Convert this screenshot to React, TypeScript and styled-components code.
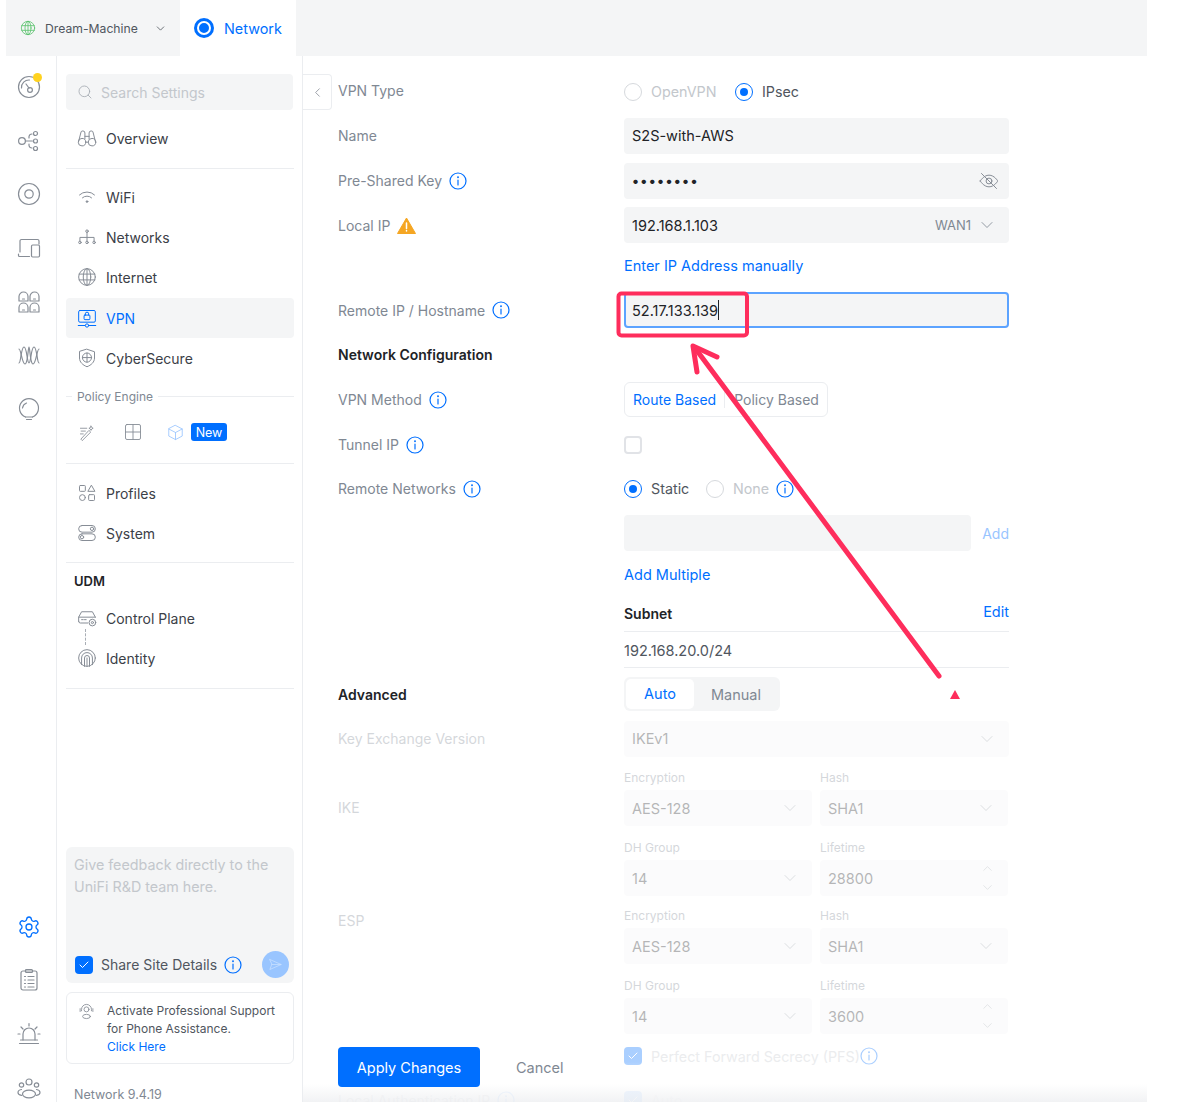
import { FC, ReactNode } from 'react';
import styled, { createGlobalStyle } from 'styled-components';
import { ChevronDown, ChevronLeft, ChevronUp, Search, Check, Settings } from 'lucide-react';

const BLUE = '#006fff';
const GREY = '#808893';
const ICON = '#878d96';
const FILL = '#f4f5f6';
const LINE = '#ebedf0';

const Global = createGlobalStyle`
  html, body { margin: 0; padding: 0; background: #fff; }
  body { font-family: Inter, "Noto Sans", "Liberation Sans", sans-serif; font-size: 14px; color: #3b4047; }
  * { box-sizing: border-box; }
`;

const Page = styled.div`
  position: relative;
  width: 1201px;
  height: 1102px;
  overflow: hidden;
  padding-left: 6px;
`;
const Shell = styled.div`
  width: 1141px;
  height: 1102px;
  display: flex;
  flex-direction: column;
`;
const Header = styled.header`
  height: 56px;
  flex: none;
  display: flex;
  background: ${FILL};
`;
const SiteSwitch = styled.div`
  width: 174px;
  display: flex;
  align-items: center;
  padding-left: 14px;
  color: #50565e;
  font-size: 12.2px;
  white-space: nowrap;
  > svg { margin-left: 16px; flex: none; }
`;
const GlobeSlot = styled.span`
  display: flex;
  margin-right: 9px;
  color: #57c26b;
`;
const NetworkTab = styled.div`
  width: 116px;
  background: #fff;
  display: flex;
  align-items: center;
  padding-left: 14px;
  gap: 10px;
  color: ${BLUE};
  font-size: 14.4px;
`;
const TabDot = styled.span`
  width: 20px;
  height: 20px;
  border-radius: 50%;
  background: ${BLUE};
  display: flex;
  align-items: center;
  justify-content: center;
  &::after {
    content: '';
    width: 10px;
    height: 10px;
    border-radius: 50%;
    border: 2.5px solid #fff;
  }
`;
const Body = styled.div`
  flex: 1;
  min-height: 0;
  display: flex;
`;
const Rail = styled.nav`
  width: 51px;
  flex: none;
  border-right: 1px solid ${LINE};
  padding: 4px 5px 0 0;
  display: flex;
  flex-direction: column;
`;
const RailGroup = styled.div<{ $gap?: number }>`
  margin-top: ${(p) => p.$gap ?? 0}px;
`;
const RailItem = styled.div<{ $active?: boolean }>`
  position: relative;
  height: 53.7px;
  display: flex;
  align-items: center;
  justify-content: center;
  color: ${(p) => (p.$active ? BLUE : ICON)};
`;
const Badge = styled.span`
  position: absolute;
  top: 13px;
  left: 27px;
  width: 9px;
  height: 9px;
  border-radius: 50%;
  background: #ffd21f;
`;
const Sidebar = styled.aside`
  width: 246px;
  flex: none;
  border-right: 1px solid ${LINE};
  padding: 18px 8px 0 9px;
  display: flex;
  flex-direction: column;
`;
const SearchBox = styled.div`
  height: 36px;
  margin: 0 1px 8px 0;
  border-radius: 4px;
  background: ${FILL};
  display: flex;
  align-items: center;
  gap: 8px;
  padding-left: 11px;
  color: #c3c7cc;
  font-size: 14px;
  svg { color: #a6abb2; }
`;
const NavRow = styled.div<{ $active?: boolean }>`
  height: 40px;
  display: flex;
  align-items: center;
  gap: 9px;
  padding-left: 11px;
  border-radius: 4px;
  font-size: 14px;
  color: ${(p) => (p.$active ? BLUE : '#3b4047')};
  background: ${(p) => (p.$active ? FILL : 'transparent')};
  margin-top: ${(p) => (p.$active ? 1 : 0)}px;
  svg { color: ${(p) => (p.$active ? BLUE : ICON)}; }
`;
const Rule = styled.hr<{ $top: number; $bottom: number }>`
  border: 0;
  height: 1px;
  flex: none;
  background: ${LINE};
  margin: ${(p) => p.$top}px 0 ${(p) => p.$bottom}px;
`;
const PolicyTitle = styled.div`
  display: flex;
  align-items: center;
  gap: 5px;
  height: 16px;
  margin-top: 10px;
  font-size: 12px;
  color: ${GREY};
  &::before { content: ''; width: 6px; height: 1px; background: ${LINE}; }
  &::after { content: ''; flex: 1; height: 1px; background: ${LINE}; }
`;
const PolicyIcons = styled.div`
  height: 40px;
  margin-top: 8px;
  display: flex;
  align-items: center;
  padding-left: 13px;
  color: ${ICON};
`;
const PolicyIcon = styled.span<{ $w: number; $tint?: boolean }>`
  width: ${(p) => p.$w}px;
  display: flex;
  color: ${(p) => (p.$tint ? '#99c5ff' : ICON)};
`;
const NewTag = styled.span`
  height: 18px;
  width: 36px;
  background: ${BLUE};
  color: #fff;
  border-radius: 3px;
  font-size: 12.5px;
  display: flex;
  align-items: center;
  justify-content: center;
`;
const GroupTitle = styled.div`
  padding-left: 8px;
  height: 20px;
  margin-bottom: 7px;
  line-height: 20px;
  font-size: 13px;
  font-weight: 600;
  color: #212327;
`;
const Dashed = styled.span`
  position: absolute;
  left: 19px;
  top: 31px;
  height: 16px;
  border-left: 1px dashed #a9aeb5;
`;
const UdmRow = styled(NavRow)`
  position: relative;
`;
const Feedback = styled.div`
  margin-top: 158px;
  height: 136px;
  border-radius: 6px;
  background: ${FILL};
  padding: 7px 8px 0 8px;
  display: flex;
  flex-direction: column;
  justify-content: space-between;
`;
const FeedbackText = styled.div`
  color: #c3c7cc;
  font-size: 14.3px;
  line-height: 22px;
`;
const ShareRow = styled.div`
  display: flex;
  align-items: center;
  padding: 0 0 5px 1px;
  color: #50565e;
  font-size: 14px;
`;
const ShareText = styled.span`
  margin: 0 7px 0 8px;
`;
const CheckBox = styled.span<{ $on?: boolean }>`
  width: 18px;
  height: 18px;
  flex: none;
  border-radius: 4px;
  border: ${(p) => (p.$on ? 'none' : '2px solid #e1e3e7')};
  background: ${(p) => (p.$on ? BLUE : '#fff')};
  color: #fff;
  display: flex;
  align-items: center;
  justify-content: center;
`;
const SendBtn = styled.span`
  width: 27px;
  height: 27px;
  margin-left: auto;
  margin-right: -3px;
  border-radius: 50%;
  background: #99c5ff;
  color: #c9e0ff;
  display: flex;
  align-items: center;
  justify-content: center;
`;
const SupportCard = styled.div`
  margin-top: 9px;
  height: 72px;
  border: 1px solid ${LINE};
  border-radius: 6px;
  padding: 9px 8px 0 11px;
  display: flex;
  gap: 12px;
  font-size: 12px;
  line-height: 18px;
  color: #50565e;
  svg { color: ${ICON}; flex: none; margin-top: 1px; }
`;
const BlueLink = styled.span`
  color: ${BLUE};
`;
const Version = styled.div`
  margin-top: 23px;
  padding-left: 8px;
  font-size: 12.5px;
  color: ${GREY};
`;

const Content = styled.main`
  position: relative;
  flex: 1;
  min-width: 0;
  overflow: hidden;
`;
const CollapseBtn = styled.div`
  position: absolute;
  top: 18px;
  left: 0;
  width: 29px;
  height: 36px;
  border: 1px solid ${LINE};
  border-left: 0;
  border-radius: 0 4px 4px 0;
  display: flex;
  align-items: center;
  justify-content: center;
  color: ${ICON};
`;
const Form = styled.div`
  padding: 12px 0 0 35px;
  width: 706px;
`;
const Row = styled.div<{ $h: number }>`
  height: ${(p) => p.$h}px;
  display: grid;
  grid-template-columns: 286px 385px;
  align-items: center;
`;
const Label = styled.div<{ $strong?: boolean; $top?: number }>`
  display: flex;
  align-items: center;
  gap: 7px;
  font-size: 14px;
  font-weight: ${(p) => (p.$strong ? 600 : 400)};
  color: ${(p) => (p.$strong ? '#212327' : GREY)};
  align-self: ${(p) => (p.$top !== undefined ? 'start' : 'auto')};
  padding-top: ${(p) => p.$top ?? 0}px;
`;
const Field = styled.div<{ $focus?: boolean }>`
  height: 36px;
  border-radius: 4px;
  background: ${FILL};
  border: ${(p) => (p.$focus ? '2px solid #5ca3ff' : 'none')};
  display: flex;
  align-items: center;
  padding: 0 ${(p) => (p.$focus ? 6 : 8)}px;
  font-size: 14.5px;
  color: #212327;
`;
const Caret = styled.span`
  width: 1px;
  height: 20px;
  background: #212327;
`;
const FieldRight = styled.span`
  margin-left: auto;
  display: flex;
  align-items: center;
  gap: 6px;
  margin-right: 4px;
  color: ${GREY};
  font-size: 13px;
`;
const EyeSlot = styled.span`
  margin-left: auto;
  display: flex;
  margin-right: 2px;
  color: ${ICON};
`;
const Dots = styled.span`
  letter-spacing: 1.3px;
  font-size: 14px;
  font-weight: 600;
`;
const RadioRow = styled.div<{ $dy?: number }>`
  display: flex;
  align-items: center;
  padding-top: ${(p) => p.$dy ?? 0}px;
`;
const Radio = styled.span<{ $on?: boolean }>`
  width: 18px;
  height: 18px;
  flex: none;
  border-radius: 50%;
  border: 1px solid ${(p) => (p.$on ? BLUE : '#d6d9dd')};
  display: flex;
  align-items: center;
  justify-content: center;
  &::after {
    content: '';
    width: 8px;
    height: 8px;
    border-radius: 50%;
    background: ${(p) => (p.$on ? BLUE : 'transparent')};
  }
`;
const RadioText = styled.span<{ $off?: boolean; $w: number }>`
  width: ${(p) => p.$w}px;
  padding-left: 9px;
  font-size: 14.3px;
  white-space: nowrap;
  color: ${(p) => (p.$off ? '#c3c7cc' : '#50565e')};
`;
const Segments = styled.div`
  width: 204px;
  height: 35px;
  border: 1px solid ${LINE};
  border-radius: 6px;
  display: flex;
  align-items: center;
  padding-left: 8px;
  font-size: 14px;
  color: ${GREY};
`;
const SegmentSep = styled.span`
  width: 1px;
  height: 16px;
  background: ${LINE};
  margin: 0 9px 0 8px;
`;
const Tabs = styled.div`
  width: 156px;
  height: 34px;
  padding: 2px;
  border-radius: 6px;
  background: ${FILL};
  display: grid;
  grid-template-columns: 68px 1fr;
  align-items: center;
  text-align: center;
  color: ${GREY};
  font-size: 14.5px;
`;
const ActiveTab = styled.span`
  height: 30px;
  line-height: 30px;
  background: #fff;
  border-radius: 5px;
  color: ${BLUE};
`;
const AddRow = styled.div`
  display: grid;
  grid-template-columns: 347px 1fr;
  align-items: center;
`;
const AddText = styled.span`
  color: #99c5ff;
  font-size: 14px;
  text-align: right;
`;
const LinkText = styled.span`
  color: ${BLUE};
  font-size: 14.5px;
`;
const SubnetHead = styled.div`
  display: flex;
  justify-content: space-between;
  align-items: center;
  height: 100%;
  font-size: 14px;
  font-weight: 600;
  color: #212327;
  border-bottom: 1px solid ${LINE};
`;
const EditLink = styled(LinkText)`
  font-weight: 400;
  margin-top: -4px;
`;
const SubnetValue = styled.div`
  display: flex;
  align-items: center;
  height: 100%;
  padding-top: 2px;
  font-size: 14.5px;
  color: #50565e;
  border-bottom: 1px solid ${LINE};
`;
const Disabled = styled.div`
  opacity: 0.33;
`;
const GroupCol = styled.div`
  align-self: start;
`;
const PairGrid = styled.div`
  display: grid;
  grid-template-columns: 188px 188px;
  column-gap: 8px;
`;
const Cell = styled.div<{ $h: number }>`
  height: ${(p) => p.$h}px;
  display: flex;
  flex-direction: column;
  justify-content: flex-end;
`;
const CellLabel = styled.div`
  font-size: 12px;
  color: ${GREY};
  margin-bottom: 5px;
`;
const Steppers = styled.span`
  margin-left: auto;
  margin-right: 5px;
  display: flex;
  flex-direction: column;
  gap: 4px;
  color: ${GREY};
`;
const FooterFade = styled.div`
  position: absolute;
  left: 0;
  right: 0;
  bottom: 0;
  height: 40px;
  background: linear-gradient(to bottom, rgba(255, 255, 255, 0), rgba(255, 255, 255, 0.8) 55%, rgba(240, 241, 243, 0.9));
`;
const Footer = styled.div`
  position: absolute;
  left: 35px;
  top: 991px;
  display: flex;
  align-items: center;
  gap: 36px;
`;
const ApplyBtn = styled.div`
  width: 142px;
  height: 40px;
  border-radius: 4px;
  background: ${BLUE};
  color: #fff;
  font-size: 14.5px;
  display: flex;
  align-items: center;
  justify-content: center;
`;
const CancelText = styled.span`
  font-size: 14.5px;
  color: ${GREY};
`;
const Overlay = styled.svg`
  position: absolute;
  inset: 0;
  pointer-events: none;
`;

const Ic: FC<{ s?: number; children: ReactNode; w?: number }> = ({ s = 20, w = 1.2, children }) => (
  <svg width={s} height={s} viewBox="0 0 24 24" fill="none" stroke="currentColor" strokeWidth={w} strokeLinecap="round" strokeLinejoin="round">
    {children}
  </svg>
);

const Info: FC = () => (
  <svg width="18" height="18" viewBox="0 0 18 18" fill="none" stroke={BLUE} strokeWidth="1.2" strokeLinecap="round">
    <circle cx="9" cy="9" r="8" />
    <path d="M9 8v5" />
    <circle cx="9" cy="5.3" r=".4" />
  </svg>
);

const Globe: FC<{ s?: number }> = ({ s = 20 }) => (
  <Ic s={s}>
    <circle cx="12" cy="12" r="10" />
    <ellipse cx="12" cy="12" rx="4.5" ry="10" />
    <path d="M12 2v20M2.6 8.5h18.8M2.6 15.5h18.8" />
  </Ic>
);

const railTop: ReactNode[] = [
  <>
    <circle cx="12" cy="12" r="10.5" />
    <path d="M4.5 13a7.5 7.5 0 0 1 8-8" />
    <path d="M9 9l3 4" />
    <circle cx="13" cy="15" r="2.4" />
  </>,
  <>
    <circle cx="5" cy="12" r="3.4" />
    <path d="M8.4 12h7M12 9v-1.500a3 3 0 0 1 3-2.500M12 15v1.500a3 3 0 0 0 3 2.500" />
    <circle cx="18.500" cy="4.500" r="2" />
    <circle cx="18.500" cy="12" r="2" />
    <circle cx="18.500" cy="19.500" r="2" />
  </>,
  <>
    <circle cx="12" cy="12" r="10.5" />
    <circle cx="12" cy="12" r="4.2" />
  </>,
  <>
    <path d="M3 16V5a1.5 1.5 0 0 1 1.5-1.5h16A1.5 1.5 0 0 1 22 5v3" />
    <path d="M1.5 18v1.5a1 1 0 0 0 1 1h10" />
    <rect x="14.5" y="9" width="8" height="12" rx="1.2" />
  </>,
  <>
    <path d="M2 11V6.5a4.5 4.5 0 0 1 9 0V11zM13 11V6.5a4.5 4.5 0 0 1 9 0V11z" />
    <path d="M2 22v-4.5a4.5 4.5 0 0 1 9 0V22zM13 22v-4.5a4.5 4.5 0 0 1 9 0V22z" />
    <path d="M5.5 9h2M16.5 9h2M5.5 20h2M16.5 20h2" />
  </>,
  <>
    <path d="M2 20C4 20 4 4 7 4s3 16 5 16 2-16 5-16 3 16 5 16" />
    <path d="M2 6c2 0 3 15 6 15s3-17 4-17 1 17 4 17 4-15 6-15" />
  </>,
  <>
    <path d="M8.500 20a9.500 9.500 0 1 1 7 0" />
    <path d="M8.500 20h7M9.500 22.500h5" />
    <path d="M5.500 11a6.500 6.500 0 0 1 4-5" />
  </>,
];

const railBottom: ReactNode[] = [
  <>
    <rect x="4" y="3" width="16" height="19" rx="2" />
    <rect x="8.500" y="1.500" width="7" height="3" rx="1" />
    <path d="M7.500 8.500h1M11 8.500h6M7.500 12h1M11 12h6M7.500 15.500h1M11 15.500h6M7.500 19h1M11 19h6" />
  </>,
  <>
    <path d="M6 18v-6a6 6 0 0 1 12 0v6" />
    <path d="M2.500 21.500h19M3.500 18h17" />
    <path d="M12 1.500v2.500M4 5l2 2M20 5l-2 2M1 12h2M21 12h2" />
  </>,
  <>
    <circle cx="12" cy="6" r="3" />
    <circle cx="4.500" cy="9" r="2.200" />
    <circle cx="19.500" cy="9" r="2.200" />
    <ellipse cx="12" cy="18" rx="6.500" ry="3.800" />
    <path d="M4.500 13.500c-2 .3-3.500 1.500-3.500 3s1.500 2.500 3.500 2.800M19.500 13.500c2 .3 3.500 1.500 3.500 3s-1.500 2.500-3.500 2.800" />
  </>,
];

const Row3: FC<{ active?: boolean; icon: ReactNode; label: string }> = ({ active, icon, label }) => (
  <NavRow $active={active}>
    <Ic>{icon}</Ic>
    {label}
  </NavRow>
);

const icons = {
  overview: (
    <>
      <circle cx="6" cy="17" r="4.500" />
      <circle cx="18" cy="17" r="4.500" />
      <path d="M2 16l2.500-10a2.500 2.500 0 0 1 5 0v7M22 16L19.500 6a2.500 2.500 0 0 0-5 0v7M9.500 10h5M10.500 17h3" />
    </>
  ),
  wifi: (
    <>
      <path d="M3 9.500a13 13 0 0 1 18 0M6.500 13a8 8 0 0 1 11 0" />
      <circle cx="12" cy="17.500" r="1" fill="currentColor" />
    </>
  ),
  networks: (
    <>
      <circle cx="12" cy="5" r="1.500" />
      <path d="M12 6.500V17M3.500 17v-4.500h17V17" />
      <circle cx="3.500" cy="18.500" r="1.500" />
      <circle cx="12" cy="18.500" r="1.500" />
      <circle cx="20.500" cy="18.500" r="1.500" />
    </>
  ),
  vpn: (
    <>
      <rect x="2" y="3" width="20" height="14" rx="1.500" />
      <rect x="8.500" y="8.500" width="7" height="5.500" rx="1" />
      <path d="M10 8.500V7a2 2 0 0 1 4 0v1.500M1.500 21h8M14.500 21h8" />
      <circle cx="12" cy="21" r="2" />
    </>
  ),
  cyber: (
    <>
      <path d="M12 1.500l9 3v7.500c0 5-4 8.500-9 10.500-5-2-9-5.500-9-10.500V4.500z" />
      <circle cx="12" cy="11.500" r="5.500" />
      <path d="M6.500 11.500h11M12 6v11" />
    </>
  ),
  profiles: (
    <>
      <rect x="3" y="3" width="7" height="7" rx="1" />
      <path d="M17.500 3l4 7h-8z" />
      <circle cx="6.500" cy="17.500" r="3.500" />
      <rect x="14" y="14" width="7" height="7" rx="1" />
    </>
  ),
  system: (
    <>
      <rect x="2" y="3" width="20" height="8" rx="4" />
      <circle cx="18" cy="7" r="2" />
      <rect x="2" y="13" width="20" height="8" rx="4" />
      <circle cx="6" cy="17" r="2" />
    </>
  ),
  control: (
    <>
      <path d="M2 16v-5l3.500-6.500h13L22 11" />
      <path d="M2 11h20M2 16a2 2 0 0 0 2 2h9M5.500 14h2M9 14h2" />
      <circle cx="18.500" cy="17.500" r="4" />
      <circle cx="18.500" cy="17.500" r="1.300" />
    </>
  ),
  identity: (
    <>
      <circle cx="12" cy="12" r="10" />
      <path d="M5.500 20V12a6.500 6.500 0 0 1 13 0v8" />
      <path d="M9 22V12a3 3 0 0 1 6 0v10M12 12v10" />
    </>
  ),
};

const Select: FC<{ v: string }> = ({ v }) => (
  <Field>
    {v}
    <FieldRight>
      <ChevronDown size={20} strokeWidth={1} />
    </FieldRight>
  </Field>
);

const Stepper: FC<{ v: string }> = ({ v }) => (
  <Field>
    {v}
    <Steppers>
      <ChevronUp size={15} strokeWidth={1} />
      <ChevronDown size={15} strokeWidth={1} />
    </Steppers>
  </Field>
);

const CryptoGroup: FC<{ first: number; dh: string; life: string }> = ({ first, dh, life }) => (
  <PairGrid>
    <Cell $h={first}>
      <CellLabel>Encryption</CellLabel>
      <Select v="AES-128" />
    </Cell>
    <Cell $h={first}>
      <CellLabel>Hash</CellLabel>
      <Select v="SHA1" />
    </Cell>
    <Cell $h={70}>
      <CellLabel>DH Group</CellLabel>
      <Select v={dh} />
    </Cell>
    <Cell $h={70}>
      <CellLabel>Lifetime</CellLabel>
      <Stepper v={life} />
    </Cell>
  </PairGrid>
);

export default function App() {
  return (
    <Page>
      <Global />
      <Shell>
        <Header>
          <SiteSwitch>
            <GlobeSlot>
              <Globe s={16} />
            </GlobeSlot>
            Dream-Machine
            <ChevronDown size={13} strokeWidth={1.5} />
          </SiteSwitch>
          <NetworkTab>
            <TabDot />
            Network
          </NetworkTab>
        </Header>
        <Body>
          <Rail>
            <RailGroup>
              {railTop.map((icon, i) => (
                <RailItem key={i}>
                  <Ic s={24}>{icon}</Ic>
                  {i === 0 && <Badge />}
                </RailItem>
              ))}
            </RailGroup>
            <RailGroup $gap={464}>
              <RailItem $active>
                <Settings size={24} strokeWidth={1.3} />
              </RailItem>
              {railBottom.map((icon, i) => (
                <RailItem key={i}>
                  <Ic s={24}>{icon}</Ic>
                </RailItem>
              ))}
            </RailGroup>
          </Rail>
          <Sidebar>
            <SearchBox>
              <Search size={16} strokeWidth={1.3} />
              Search Settings
            </SearchBox>
            <Row3 icon={icons.overview} label="Overview" />
            <Rule $top={10} $bottom={8} />
            <Row3 icon={icons.wifi} label="WiFi" />
            <Row3 icon={icons.networks} label="Networks" />
            <NavRow>
              <Globe />
              Internet
            </NavRow>
            <Row3 active icon={icons.vpn} label="VPN" />
            <Row3 icon={icons.cyber} label="CyberSecure" />
            <PolicyTitle>Policy Engine</PolicyTitle>
            <PolicyIcons>
              <PolicyIcon $w={45}>
                <Ic s={17}>
                  <path d="M3 21L14 9l2.500 2.500L5 23zM2 6h9M3 10h6M2 14h4M17 3l1 2 2 1-2 1-1 2-1-2-2-1 2-1z" />
                </Ic>
              </PolicyIcon>
              <PolicyIcon $w={43}>
                <Ic s={18}>
                  <rect x="2" y="2" width="20" height="20" rx="2" />
                  <path d="M12 2v20M2 12h20" />
                </Ic>
              </PolicyIcon>
              <PolicyIcon $w={24} $tint>
                <Ic s={17}>
                  <path d="M12 2l9.500 5v10L12 22l-9.500-5V7zM2.500 7L12 12l9.500-5M12 12v10" />
                </Ic>
              </PolicyIcon>
              <NewTag>New</NewTag>
            </PolicyIcons>
            <Rule $top={11} $bottom={9} />
            <Row3 icon={icons.profiles} label="Profiles" />
            <Row3 icon={icons.system} label="System" />
            <Rule $top={9} $bottom={8} />
            <GroupTitle>UDM</GroupTitle>
            <UdmRow>
              <Ic>{icons.control}</Ic>
              Control Plane
              <Dashed />
            </UdmRow>
            <Row3 icon={icons.identity} label="Identity" />
            <Rule $top={10} $bottom={0} />
            <Feedback>
              <FeedbackText>
                Give feedback directly to the
                <br />
                UniFi R&amp;D team here.
              </FeedbackText>
              <ShareRow>
                <CheckBox $on>
                  <Check size={12} strokeWidth={2} />
                </CheckBox>
                <ShareText>Share Site Details</ShareText>
                <Info />
                <SendBtn>
                  <Ic s={15}>
                    <path d="M3 4l18 8-18 8 3-8zM6 12h15" />
                  </Ic>
                </SendBtn>
              </ShareRow>
            </Feedback>
            <SupportCard>
              <Ic s={17}>
                <circle cx="12" cy="9" r="3.500" />
                <path d="M5 11V9a7 7 0 0 1 14 0v2M3 8v4M21 8v4" />
                <ellipse cx="12" cy="19" rx="5.500" ry="3" />
              </Ic>
              <div>
                Activate Professional Support
                <br />
                for Phone Assistance.
                <br />
                <BlueLink>Click Here</BlueLink>
              </div>
            </SupportCard>
            <Version>Network 9.4.19</Version>
          </Sidebar>
          <Content>
            <CollapseBtn>
              <ChevronLeft size={15} strokeWidth={1.3} />
            </CollapseBtn>
            <Form>
              <Row $h={45}>
                <Label>VPN Type</Label>
                <RadioRow $dy={2}>
                  <Radio />
                  <RadioText $off $w={93}>OpenVPN</RadioText>
                  <Radio $on />
                  <RadioText $w={60}>IPsec</RadioText>
                </RadioRow>
              </Row>
              <Row $h={45}>
                <Label>Name</Label>
                <Field>S2S-with-AWS</Field>
              </Row>
              <Row $h={45}>
                <Label>
                  Pre-Shared Key <Info />
                </Label>
                <Field>
                  <Dots>••••••••</Dots>
                  <EyeSlot>
                    <Ic s={20}>
                      <path d="M1.500 12S5.500 5 12 5s10.500 7 10.500 7-4 7-10.500 7S1.500 12 1.500 12z" />
                      <circle cx="12" cy="12" r="3.500" />
                      <path d="M3 3l18 18" />
                    </Ic>
                  </EyeSlot>
                </Field>
              </Row>
              <Row $h={44}>
                <Label>
                  Local IP
                  <svg width="19" height="17" viewBox="0 0 19 17">
                    <path d="M9.500 1L18.500 16.500H.5z" fill="#f5a623" stroke="#f5a623" strokeLinejoin="round" />
                    <path d="M9.500 6v5.500M9.500 13.500v.5" stroke="#fff" strokeWidth="1.500" strokeLinecap="round" />
                  </svg>
                </Label>
                <Field>
                  192.168.1.103
                  <FieldRight>
                    WAN1 <ChevronDown size={20} strokeWidth={1} />
                  </FieldRight>
                </Field>
              </Row>
              <Row $h={37}>
                <span />
                <LinkText>Enter IP Address manually</LinkText>
              </Row>
              <Row $h={52}>
                <Label>
                  Remote IP / Hostname <Info />
                </Label>
                <Field $focus>
                  52.17.133.139
                  <Caret />
                </Field>
              </Row>
              <Row $h={37}>
                <Label $strong>Network Configuration</Label>
              </Row>
              <Row $h={53}>
                <Label>
                  VPN Method <Info />
                </Label>
                <Segments>
                  <BlueLink>Route Based</BlueLink>
                  <SegmentSep />
                  Policy Based
                </Segments>
              </Row>
              <Row $h={37}>
                <Label>
                  Tunnel IP <Info />
                </Label>
                <CheckBox />
              </Row>
              <Row $h={51}>
                <Label>
                  Remote Networks <Info />
                </Label>
                <RadioRow>
                  <Radio $on />
                  <RadioText $w={64}>Static</RadioText>
                  <Radio />
                  <RadioText $off $w={52}>None</RadioText>
                  <Info />
                </RadioRow>
              </Row>
              <Row $h={38}>
                <span />
                <AddRow>
                  <Field />
                  <AddText>Add</AddText>
                </AddRow>
              </Row>
              <Row $h={44}>
                <span />
                <LinkText>Add Multiple</LinkText>
              </Row>
              <Row $h={36}>
                <span />
                <SubnetHead>
                  Subnet
                  <EditLink>Edit</EditLink>
                </SubnetHead>
              </Row>
              <Row $h={36}>
                <span />
                <SubnetValue>192.168.20.0/24</SubnetValue>
              </Row>
              <Row $h={52}>
                <Label $strong>Advanced</Label>
                <Tabs>
                  <ActiveTab>Auto</ActiveTab>
                  Manual
                </Tabs>
              </Row>
              <Disabled>
                <Row $h={37}>
                  <Label>Key Exchange Version</Label>
                  <Select v="IKEv1" />
                </Row>
                <Row $h={139}>
                  <Label $top={42}>IKE</Label>
                  <GroupCol>
                    <CryptoGroup first={69} dh="14" life="28800" />
                  </GroupCol>
                </Row>
                <Row $h={138}>
                  <Label $top={16}>ESP</Label>
                  <GroupCol>
                    <CryptoGroup first={68} dh="14" life="3600" />
                  </GroupCol>
                </Row>
                <Row $h={44}>
                  <span />
                  <RadioRow>
                    <CheckBox $on>
                      <Check size={12} strokeWidth={2} />
                    </CheckBox>
                    <RadioText $off $w={218}>Perfect Forward Secrecy (PFS)</RadioText>
                    <Info />
                  </RadioRow>
                </Row>
                <Row $h={44}>
                  <Label>
                    Local Authentication IP <Info />
                  </Label>
                  <RadioRow>
                    <CheckBox $on>
                      <Check size={12} strokeWidth={2} />
                    </CheckBox>
                    <RadioText $off $w={218}>Auto</RadioText>
                  </RadioRow>
                </Row>
              </Disabled>
            </Form>
            <FooterFade />
            <Footer>
              <ApplyBtn>Apply Changes</ApplyBtn>
              <CancelText>Cancel</CancelText>
            </Footer>
          </Content>
        </Body>
      </Shell>
      <Overlay width="1201" height="1102" viewBox="0 0 1201 1102" fill="none">
        <rect x="618.500" y="293.500" width="128.500" height="42" rx="3" stroke="#fe2d5c" strokeWidth="4" />
        <path d="M939 676L695 348" stroke="#fe2d5c" strokeWidth="5" strokeLinecap="round" />
        <path d="M697 372L693 346L717 357" stroke="#fe2d5c" strokeWidth="5" strokeLinecap="round" strokeLinejoin="round" />
        <path d="M955 690l5 9h-10z" fill="#fe2d5c" />
      </Overlay>
    </Page>
  );
}
